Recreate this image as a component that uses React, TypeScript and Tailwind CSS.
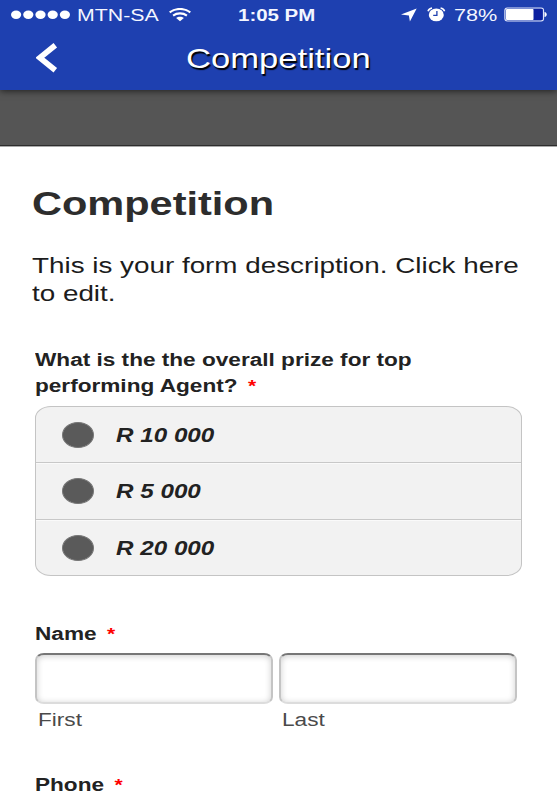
import type { ReactNode } from "react";

const FONT = "font-['Liberation_Sans',Arial,sans-serif]";

/* Wide-set text: glyphs are stretched horizontally from the left edge. */
function Wide({ children, className = "scale-x-[1.236]" }: { children: ReactNode; className?: string }) {
  return (
    <span className={`block w-max origin-left whitespace-nowrap ${className}`}>
      {children}
    </span>
  );
}

function StatusBar() {
  return (
    <div className="flex h-[29px] items-center text-[17.2px] leading-[29px] text-[#f4f6ff]">
      <svg className="ml-[11px] h-[10px] w-[60px] shrink-0" viewBox="0 0 60 10" fill="#fff">
        {[5.1, 17.3, 29.5, 41.7, 53.9].map((x) => (
          <ellipse key={x} cx={x} cy="4.8" rx="5.1" ry="4.2" />
        ))}
      </svg>
      <div className="ml-[5.5px] w-[92.5px] pt-px">
        <Wide className="scale-x-[1.24]">MTN-SA</Wide>
      </div>
      <svg className="h-[14px] w-[22px] shrink-0" viewBox="0 0 22 14" fill="none" stroke="#fff">
        <path d="M0.7 4.4C6.5-.2 15.5-.2 21.3 4.4" strokeWidth="2.1" />
        <path d="M4.1 7.6C8 4.6 14 4.6 17.9 7.6" strokeWidth="2.1" />
        <path d="M7.1 10.1C9.3 8.3 12.7 8.3 14.9 10.1L11 13.3Z" fill="#fff" stroke="none" />
      </svg>
      <div className="ml-[47px] w-[163px] pt-px font-bold">
        <Wide className="scale-x-[1.19]">1:05 PM</Wide>
      </div>
      <svg className="h-[14px] w-[16px] shrink-0" viewBox="0 0 16 14" fill="#fff">
        <path d="M15.7 0.4L8.9 13.6L7.9 7.4L0 6.6Z" />
      </svg>
      <svg className="ml-[9.5px] h-[15px] w-[19px] shrink-0" viewBox="0 0 19 15">
        <ellipse cx="9.3" cy="7.9" rx="7.5" ry="6.4" fill="#fff" />
        <path d="M1 4.3C1.6 2.4 3 1.3 5 1M17.6 4.3C17 2.4 15.6 1.3 13.6 1" fill="none" stroke="#fff" strokeWidth="1.5" />
        <path d="M9.9 4V8.3H6.2" fill="none" stroke="#1e40b0" strokeWidth="1.3" />
      </svg>
      <div className="ml-[8px] w-[50px] pt-px">
        <Wide className="scale-x-[1.26]">78%</Wide>
      </div>
      <svg className="h-[15px] w-[44px] shrink-0" viewBox="0 0 44 15">
        <rect x="0.9" y="1" width="38.6" height="13" rx="2.4" fill="none" stroke="#dfe4fa" strokeWidth="1.2" />
        <rect x="2" y="2" width="27.7" height="11" rx="1" fill="#fff" />
        <rect x="29.7" y="2" width="8.8" height="11" fill="#0c20a0" />
        <path d="M40.5 5C43.5 5.5 43.5 9.5 40.5 10Z" fill="#fff" />
      </svg>
    </div>
  );
}

function Header() {
  return (
    <header className="relative z-10 h-[90px] bg-[#1e40b0] text-white shadow-[0_1px_7px_rgba(0,0,0,0.65)]">
      <StatusBar />
      <div className="flex h-[57px] items-center">
        <svg className="ml-[36px] h-[30px] w-[22px] shrink-0" viewBox="0 0 22 30" fill="none" stroke="#fff" strokeWidth="5.6">
          <path d="M19.3 2.3L3.8 14.8L19.3 27.3" />
        </svg>
        <div className="ml-[127.5px] pt-[2px] text-[28px] leading-[34px] [text-shadow:1px_2px_1px_#000]">
          <Wide>Competition</Wide>
        </div>
      </div>
    </header>
  );
}

function Label({ lines }: { lines: string[] }) {
  return (
    <div className="text-[18.3px] font-bold leading-[25.3px] text-[#222]">
      {lines.map((line, i) => (
        <Wide key={line}>
          {line}
          {i === lines.length - 1 && <span className="ml-[8.5px] text-[17px] leading-none text-[#ff0000]">*</span>}
        </Wide>
      ))}
    </div>
  );
}

function Option({ text, first }: { text: string; first?: boolean }) {
  return (
    <li className={`flex flex-1 items-center ${first ? "" : "border-t-[1.5px] border-[#c8c8c8] shadow-[inset_0_1px_0_#fafafa]"}`}>
      <span className="ml-[26px] mt-px h-[26px] w-[32px] rounded-[50%] border border-[#777] bg-[#5a5a5a]" />
      <div className="ml-[22px] mt-px text-[19.6px] font-bold italic leading-[24px] text-[#222]">
        <Wide>{text}</Wide>
      </div>
    </li>
  );
}

function Field({ caption }: { caption: string }) {
  return (
    <div className="w-[238px]">
      <input
        className="block h-[51px] w-full rounded-[9px/7px] border-[2px] border-[#c4c4c4] border-t-[#777] border-b-[#dcdcdc] bg-white shadow-[inset_0_1px_6px_rgba(0,0,0,0.2)] outline-none"
        aria-label={caption}
      />
      <div className="ml-[3px] mt-[3.5px] text-[18.3px] leading-[24px] text-[#4a4a4a]">
        <Wide>{caption}</Wide>
      </div>
    </div>
  );
}

export default function App() {
  return (
    <div className={`h-[800px] w-[557px] overflow-hidden bg-white ${FONT}`}>
      <Header />
      <div className="h-[57px] border-b border-[#aaa] bg-[#555] shadow-[inset_0_-1px_0_#2d2d2d]" />
      <main className="pl-[35px] pt-[37px]">
        <div className="-ml-[3.5px]">
          <h1 className="text-[33.6px] font-bold leading-[40px] text-[#2d2d2d]">
            <Wide>Competition</Wide>
          </h1>
          <div className="mt-[27.5px] text-[22.5px] leading-[28.2px] text-[#1c1c1c]">
            <Wide>This is your form description. Click here</Wide>
            <Wide>to edit.</Wide>
          </div>
        </div>
        <div className="mt-[39.5px]">
          <Label lines={["What is the the overall prize for top", "performing Agent?"]} />
        </div>
        <ul className="mt-[8px] flex h-[170px] w-[487px] flex-col rounded-[16px/12px] border-[1.5px] border-[#c4c4c4] bg-[#f2f2f2]">
          <Option text="R 10 000" first />
          <Option text="R 5 000" />
          <Option text="R 20 000" />
        </ul>
        <div className="mt-[44.6px]">
          <Label lines={["Name"]} />
        </div>
        <div className="mt-[7.5px] flex gap-[6px]">
          <Field caption="First" />
          <Field caption="Last" />
        </div>
        <div className="mt-[40.5px]">
          <Label lines={["Phone"]} />
        </div>
      </main>
    </div>
  );
}
